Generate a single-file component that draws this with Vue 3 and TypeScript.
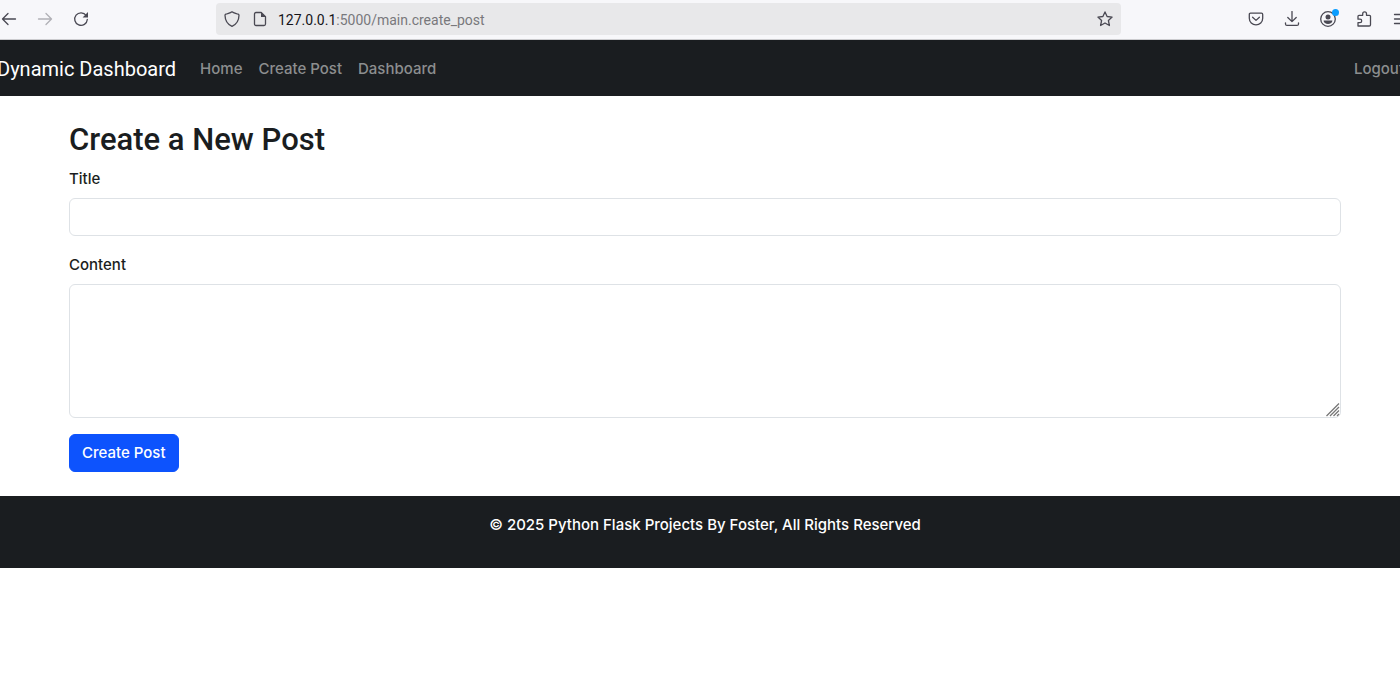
<script setup lang="ts">
import { ref } from 'vue'

interface NavLink {
  label: string
  href: string
}

const links: NavLink[] = [
  { label: 'Home', href: '#home' },
  { label: 'Create Post', href: '#create' },
  { label: 'Dashboard', href: '#dashboard' },
]

const title = ref('')
const content = ref('')
</script>

<template>
  <div class="window">
    <div class="toolbar">
      <div class="tools tools-left">
        <button type="button" class="tool" aria-label="Back">
          <svg viewBox="0 0 16 16"><path d="M14.500 8H1.500M7 2.500 1.500 8l5.500 5.500" /></svg>
        </button>
        <button type="button" class="tool faded" aria-label="Forward">
          <svg viewBox="0 0 16 16"><path d="M1.500 8h13M9 2.500 14.500 8l-5.500 5.500" /></svg>
        </button>
        <button type="button" class="tool" aria-label="Reload">
          <svg viewBox="0 0 16 16">
            <path d="M13.200 4.500A6.300 6.300 0 1 0 14.300 8.500" />
            <path class="solid" d="M15 1v5.400h-5.400z" />
          </svg>
        </button>
      </div>
      <div class="urlbar">
        <svg class="glyph" viewBox="0 0 16 16"><path d="M8 .8C6.500 2 3.600 2.500 1.800 3.200c-.5.200-.8.500-.8 1.100.1 5 2.200 9 7 11 4.800-2 6.900-6 7-11 0-.6-.3-.9-.8-1.100C12.400 2.500 9.500 2 8 .8z" /></svg>
        <svg class="glyph" viewBox="0 0 16 16">
          <path d="M4 1.500h5.200L13.500 5.800v7.200c0 .9-.6 1.500-1.500 1.500H4c-.9 0-1.500-.6-1.500-1.500V3c0-.9.6-1.500 1.500-1.500z" />
          <path class="solid" d="M9 1v5h5z" />
        </svg>
        <div class="url"><span class="host">127.0.0.1</span>:5000/main.create_post</div>
        <button type="button" class="tool" aria-label="Bookmark this page">
          <svg viewBox="0 0 16 16"><path d="M8 .9l2.100 4.600 5 .6-3.700 3.400 1 5L8 12l-4.400 2.500 1-5L.9 6.100l5-.6z" /></svg>
        </button>
      </div>
      <div class="tools tools-right">
        <button type="button" class="tool" aria-label="Save to Pocket">
          <svg viewBox="0 0 16 16">
            <path d="M2.500 2.200h11c.7 0 1.200.5 1.200 1.200v3.800a6.700 6.700 0 0 1-13.400 0V3.400c0-.7.5-1.200 1.200-1.200z" />
            <path d="M4.600 6.200 8 9.400l3.400-3.200" />
          </svg>
        </button>
        <button type="button" class="tool" aria-label="Downloads">
          <svg viewBox="0 0 16 16"><path d="M8 .5v10M3.800 6.500 8 10.600l4.200-4.100M1.500 11.800v1.100c0 .9.600 1.500 1.500 1.500h10c.9 0 1.500-.6 1.500-1.500v-1.100" /></svg>
        </button>
        <button type="button" class="tool" aria-label="Account">
          <svg viewBox="0 0 16 16">
            <circle cx="8" cy="8" r="7.300" />
            <circle class="solid" cx="8" cy="5.900" r="2.500" />
            <path class="solid" d="M3.600 9.500h8.800c0 2-2 3.500-4.400 3.500s-4.400-1.500-4.400-3.500z" />
          </svg>
          <span class="dot"></span>
        </button>
        <button type="button" class="tool" aria-label="Extensions">
          <svg viewBox="0 0 16 16"><path d="M2 15h11.200c.8 0 1.300-.5 1.300-1.300V5.300c0-.6-.4-1-1-1h-3V2.700a1.900 1.900 0 0 0-3.800 0v1.600H3c-.6 0-1 .4-1 1v2.900h2a1.700 1.700 0 0 1 0 3.400H2z" /></svg>
        </button>
        <button type="button" class="tool" aria-label="Menu">
          <svg viewBox="0 0 16 16"><path d="M2.500 3.500H15M2.500 8H15M2.500 12.500H15" /></svg>
        </button>
      </div>
    </div>

    <nav class="navbar">
      <a class="brand" href="#top">Dynamic Dashboard</a>
      <a v-for="link in links" :key="link.href" class="nav-link" :href="link.href">{{ link.label }}</a>
      <a class="nav-link logout" href="#logout">Logout</a>
    </nav>

    <main class="container">
      <h2>Create a New Post</h2>
      <form @submit.prevent>
        <label for="title">Title</label>
        <input id="title" v-model="title" class="field" type="text" />
        <label for="content">Content</label>
        <textarea id="content" v-model="content" class="field" rows="5"></textarea>
        <button type="submit" class="submit">Create Post</button>
      </form>
    </main>

    <footer class="footer">© 2025 Python Flask Projects By Foster, All Rights Reserved</footer>
  </div>
</template>

<style>
body {
  background: #fff;
}
</style>

<style scoped>
.window {
  overflow: hidden;
  font-family: Inter, Roboto, sans-serif;
  font-size: 15px;
  font-weight: 500;
  line-height: 26px;
  color: #1a1d20;
}

.window * {
  box-sizing: border-box;
}

.toolbar {
  display: flex;
  align-items: center;
  height: 40px;
  padding-bottom: 1px;
  background: #f7f7fa;
  border-bottom: 1px solid #cccccf;
}

.tools {
  display: flex;
  gap: 20px;
  flex: none;
}

.tools-left {
  width: 216px;
  padding-left: 1px;
}

.tools-right {
  width: 279px;
  padding-left: 127px;
}

.tool {
  position: relative;
  display: block;
  flex: none;
  width: 16px;
  height: 16px;
  padding: 0;
  border: 0;
  background: none;
  color: #4a4953;
}

.faded {
  opacity: 0.4;
}

svg {
  display: block;
  width: 16px;
  height: 16px;
  fill: none;
  stroke: currentColor;
  stroke-width: 1.3;
  stroke-linecap: round;
  stroke-linejoin: round;
}

.solid {
  fill: currentColor;
  stroke: none;
}

.dot {
  position: absolute;
  top: -2px;
  right: -3px;
  width: 7px;
  height: 7px;
  border-radius: 50%;
  background: #0a9dff;
}

.urlbar {
  display: flex;
  flex: 1;
  align-items: center;
  gap: 12px;
  height: 32px;
  padding: 0 8px;
  border-radius: 4px;
  background: #e8e8ea;
  color: #4a4953;
}

.glyph {
  flex: none;
}

.url {
  flex: 1;
  margin-left: -2px;
  padding-top: 1px;
  font-family: Roboto, sans-serif;
  font-size: 14px;
  font-weight: 400;
  color: #78787c;
}

.host {
  color: #151419;
}

.navbar {
  display: flex;
  align-items: center;
  height: 56px;
  padding-top: 2px;
  background: #1a1d20;
}

.brand {
  margin-left: -3px;
  margin-right: 16px;
  font-family: Roboto, sans-serif;
  font-size: 20px;
  font-weight: 400;
  color: #fff;
  text-decoration: none;
  white-space: nowrap;
}

.nav-link {
  padding: 8px;
  color: #8c8e8f;
  text-decoration: none;
  white-space: nowrap;
}

.logout {
  margin-left: auto;
  margin-right: -12px;
}

.container {
  padding: 24px 59px 24px 69px;
}

h2 {
  margin: 0 0 6px;
  font-family: Roboto, sans-serif;
  font-size: 31px;
  font-weight: 500;
  line-height: 40px;
}

label {
  display: block;
  margin-bottom: 6px;
}

.field {
  display: block;
  width: 100%;
  margin: 0 0 16px;
  padding: 6px 12px;
  border: 1px solid #dee2e6;
  border-radius: 6px;
  background: #fff;
  font: inherit;
  color: inherit;
  outline: none;
}

input.field {
  height: 38px;
}

textarea.field {
  height: 134px;
  resize: vertical;
}

textarea.field::-webkit-resizer {
  background: url("data:image/svg+xml,%3Csvg xmlns='http://www.w3.org/2000/svg' viewBox='0 0 15 15'%3E%3Cpath d='M1.500 14 14 1.500M5 14 14 5M8.500 14 14 8.500M12 14 14 12' stroke='%23777' stroke-width='1.300'/%3E%3C/svg%3E") center / 15px 15px no-repeat;
}

.submit {
  display: block;
  height: 38px;
  padding: 0 12px;
  border: 1px solid #0d53fd;
  border-radius: 6px;
  background: #0d53fd;
  font: inherit;
  color: #fff;
}

.footer {
  height: 72px;
  padding: 16px 0 30px 10px;
  background: #1a1d20;
  color: #fff;
  text-align: center;
}
</style>
